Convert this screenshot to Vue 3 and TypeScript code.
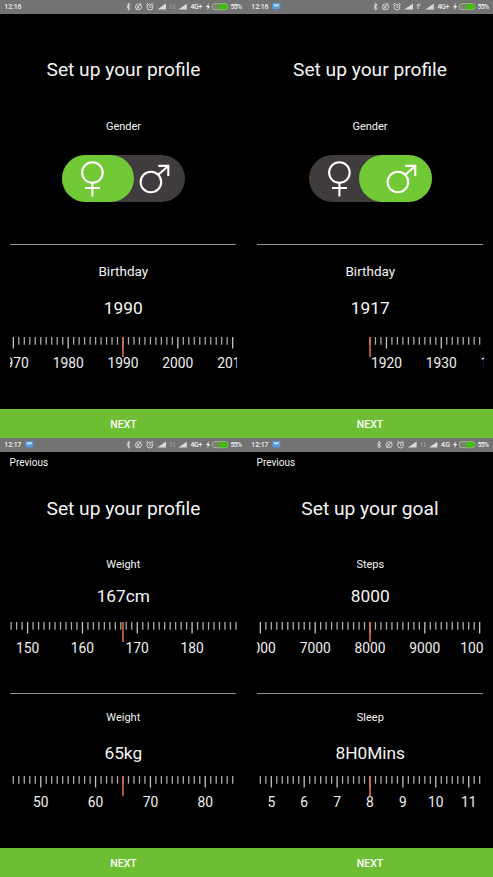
<script setup lang="ts">
interface Ruler {
  title: string
  large?: boolean
  value: string
  center: number
  every: number
  min?: number
  label: (tick: number) => string
}
interface Screen {
  id: number
  time: string
  chat: boolean
  network: string
  shift: number
  faint: boolean
  previous: boolean
  title: string
  gender?: 'female' | 'male'
  rulers: Ruler[]
}

const STEP = 5.483
const MID = 113

const plain = (n: number) => String(n)

const screens: Screen[] = [
  {
    id: 1, time: '12:16', chat: false, network: '4G+', shift: 0, faint: true, previous: false,
    title: 'Set up your profile', gender: 'female',
    rulers: [{ title: 'Birthday', large: true, value: '1990', center: 1990, every: 10, label: plain }],
  },
  {
    id: 2, time: '12:16', chat: true, network: '4G+', shift: 0, faint: false, previous: false,
    title: 'Set up your profile', gender: 'male',
    rulers: [{ title: 'Birthday', large: true, value: '1917', center: 1917, every: 10, min: 1917, label: plain }],
  },
  {
    id: 3, time: '12:17', chat: true, network: '4G+', shift: 0, faint: true, previous: true,
    title: 'Set up your profile',
    rulers: [
      { title: 'Weight', value: '167cm', center: 167.4, every: 10, label: plain },
      { title: 'Weight', value: '65kg', center: 65, every: 10, label: plain },
    ],
  },
  {
    id: 4, time: '12:17', chat: true, network: '4G', shift: 3.6, faint: true, previous: true,
    title: 'Set up your goal',
    rulers: [
      { title: 'Steps', value: '8000', center: 80, every: 10, label: (n) => String(n * 100) },
      { title: 'Sleep', value: '8H0Mins', center: 48, every: 6, label: (n) => String(n / 6) },
    ],
  },
]

const visible = (x: number) => x > 0 && x < 226.5

function ticks(r: Ruler) {
  const out: { n: number; x: number; major: boolean; label: string }[] = []
  for (let n = Math.floor(r.center) - 24; n <= r.center + 25; n++) {
    if (r.min !== undefined && n < r.min) continue
    const x = MID + (n - r.center) * STEP
    if (x < -12 || x > 240) continue
    const major = n % r.every === 0
    const label = major ? r.label(n) : ''
    const half = label.length * 3.85
    out.push({ n, x, major, label: x + half > 0 && x - half < 225 ? label : '' })
  }
  return out
}
</script>

<template>
  <main class="board">
    <section v-for="s in screens" :key="s.id" class="screen" :class="s.gender ? 'intro' : 'double'">
      <header class="status">
        <svg class="status-art" width="246" height="14" viewBox="0 0 246 14">
          <text x="4.3" y="9.4" class="st" textLength="17.2">{{ s.time }}</text>
          <g v-if="s.chat">
            <path d="M25.3 3h8v4.8q0 1.7-1.7 1.7h-4.6q-1.7 0-1.7-1.7z" fill="#579be0" />
            <path d="M27 3.8l2.3 1.2 2.3-1.2v2.5h-4.6z" fill="#d5e9fb" />
          </g>
          <g :transform="`translate(${s.shift} 0)`" fill="none" stroke="#dedede" stroke-width="0.9">
            <path d="M126.6 4.9l3.6 3.6-1.8 1.6V3.2l1.8 1.6-3.6 3.6" />
            <circle cx="138.5" cy="6.8" r="3" />
            <path d="M136 9.7l5.2-6.2M137 5.5l2.2 3" />
            <circle cx="149.9" cy="7.1" r="2.9" />
            <path d="M149.9 5.5v1.8h1.5M146.3 4.6l1.7-1.6M153.5 4.6l-1.7-1.6" />
            <path d="M157.3 9.6l8.7-6v6z" fill="#dadada" stroke="none" />
            <path :stroke="s.faint ? '#999' : '#dadada'" d="M171 9V4.2l-1.1 1.3" />
            <path v-if="s.faint" stroke="#999" d="M174 4v5l1.1-1.3" />
            <path v-else d="M171 4l2.8 1.5" />
            <path d="M178.3 9.6l8.5-5.8v5.8z" fill="#dadada" stroke="none" />
          </g>
          <text :x="s.shift ? 194 : 190.4" y="9.4" class="st" :textLength="s.shift ? 9 : 12">{{ s.network }}</text>
          <path d="M209 3l-3 4.2h2l-.8 3 3-4.2h-2z" fill="#efefef" />
          <rect x="212.4" y="3.7" width="15.6" height="6" rx="2.6" fill="#77836f" stroke="#abc69e" stroke-width="0.8" />
          <path d="M219.2 4h6.2q2.6 0 2.6 2.7t-2.6 2.7h-6.2z" fill="#43bd12" />
          <text x="230.6" y="9.4" class="st" textLength="11.6">55%</text>
        </svg>
      </header>

      <div v-if="s.previous" class="previous">Previous</div>
      <h1 class="title">{{ s.title }}</h1>

      <template v-if="s.gender">
        <div class="caption gender">Gender</div>
        <div class="toggle" :class="s.gender">
          <div class="knob"></div>
          <svg class="glyphs" width="123.4" height="47.4" viewBox="0 0 123.4 47.4" fill="none" stroke="#fff" stroke-width="2.1">
            <circle cx="30.4" cy="17.6" r="10.3" />
            <path d="M30.4 28v13.4M23 33h15" />
            <circle cx="88.9" cy="27" r="10.3" />
            <path d="M96.2 19.7l9.8-8.5M96.3 10.9h10V21" />
          </svg>
        </div>
      </template>

      <div v-for="(r, i) in s.rulers" :key="i" class="block" :class="{ ruled: s.gender || i === 1 }">
        <div class="caption" :class="{ large: r.large }">{{ r.title }}</div>
        <div class="value">{{ r.value }}</div>
        <svg class="ruler" width="227" height="36" viewBox="0 0 227 36">
          <template v-for="t in ticks(r)" :key="t.n">
            <line
              v-if="visible(t.x)" :x1="t.x" :x2="t.x" y1="0" :y2="t.major ? 11.5 : 7.7"
              :stroke="t.major ? '#c4c4c4' : '#aaa'" stroke-width="1.3"
            />
            <text v-if="t.label" :x="t.x" y="31" class="tick">{{ t.label }}</text>
          </template>
          <line :x1="MID" :x2="MID" y1="0" y2="20" stroke="#dc6a43" stroke-width="1.6" />
        </svg>
      </div>

      <button class="next" type="button">NEXT</button>
    </section>
  </main>
</template>

<style>
body {
  background: #000;
}
</style>

<style scoped>
.board {
  display: grid;
  grid-template-columns: 247px 246px;
  grid-template-rows: 438px 439px;
  width: 493px;
  height: 877px;
  overflow: hidden;
  background: #000;
  color: #f4f4f4;
  font-family: Roboto, "Liberation Sans", sans-serif;
}
.screen {
  display: flex;
  flex-direction: column;
  min-width: 0;
  overflow: hidden;
}
.status {
  flex: none;
  height: 13.5px;
  background: #737373;
}
.double .status {
  height: 14px;
}
.status-art {
  display: block;
}
.st {
  font-size: 6.9px;
  font-weight: 500;
  fill: #f0f0f0;
}
.previous {
  height: 14px;
  margin: 3.5px 0 0 9.6px;
  font-size: 10px;
  line-height: 14px;
}
.title {
  margin: 43.5px 0 0;
  font-size: 19.2px;
  font-weight: 400;
  line-height: 26px;
  text-align: center;
}
.double .title {
  margin-top: 26px;
}
.caption {
  font-size: 11px;
  line-height: 14px;
  text-align: center;
}
.gender {
  margin-top: 37px;
}
.caption.large {
  font-size: 13.5px;
  line-height: 18px;
}
.toggle {
  flex: none;
  display: grid;
  width: 123.4px;
  height: 47.4px;
  margin: 21px 0 0 61.6px;
  border-radius: 24px;
  background: #403b3c;
}
.knob {
  grid-area: 1 / 1;
  width: 72.6px;
  height: 100%;
  border-radius: 24px;
  background: #72c936;
}
.male .knob {
  justify-self: end;
}
.glyphs {
  grid-area: 1 / 1;
}
.block {
  display: flex;
  flex-direction: column;
  margin: 36px 0 0 10.3px;
  width: 226px;
}
.value {
  margin-top: 17px;
  font-size: 17.3px;
  line-height: 22px;
  text-align: center;
}
.ruler {
  display: block;
  margin-top: 18px;
  overflow: hidden;
}
.tick {
  font-size: 13.8px;
  fill: #f0f0f0;
  text-anchor: middle;
}
.intro .block {
  margin-top: 41.2px;
}
.ruled {
  border-top: 1px solid #8f8f8f;
}
.intro .caption.large {
  margin-top: 17px;
}
.double .value {
  margin-top: 13px;
}
.double .ruler {
  margin-top: 15px;
}
.double .ruled {
  margin-top: 35px;
}
.double .ruled .caption {
  margin-top: 17px;
}
.double .ruled .value {
  margin-top: 17.5px;
}
.double .ruled .ruler {
  margin-top: 11.5px;
}
.next {
  flex: none;
  height: 29px;
  margin: auto 0 0;
  padding: 2px 0 0;
  border: 0;
  background: #6ebe34;
  color: #fff;
  font-family: inherit;
  font-size: 10.5px;
  font-weight: 500;
  line-height: 27px;
}
</style>
